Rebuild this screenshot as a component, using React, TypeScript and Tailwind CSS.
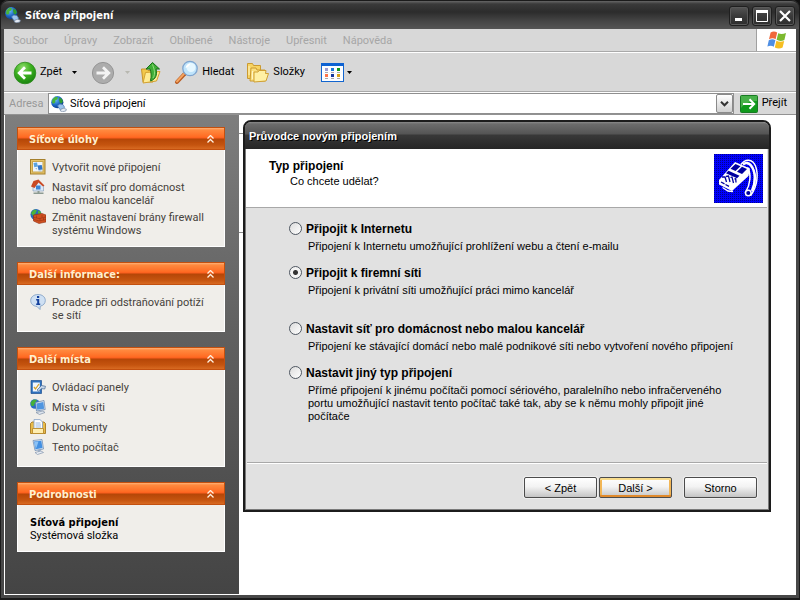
import React, { useState } from "react";

const ui = "font-[Roboto,'DejaVu_Sans_Condensed',sans-serif]";
const uiBold = "font-['DejaVu_Sans_Condensed','DejaVu_Sans',sans-serif] font-bold";
const sans = "font-['Liberation_Sans',Arial,sans-serif]";

type IconProps = { size?: number };

function NetGlobe({ size = 16 }: IconProps) {
  return (
    <svg width={size} height={size} viewBox="0 0 16 16" aria-hidden="true">
      <defs>
        <radialGradient id="globe" cx="0.35" cy="0.3" r="0.8">
          <stop offset="0" stopColor="#6fc0f4" />
          <stop offset="0.55" stopColor="#1c66c4" />
          <stop offset="1" stopColor="#0b2f7c" />
        </radialGradient>
      </defs>
      <circle cx="6.3" cy="6.2" r="6.1" fill="url(#globe)" />
      <path d="M1.5 3.2 4.5.8 7 1.2 6.2 3.4 4.4 4.2 4.2 6.5 2.4 7.8 1 6.4z" fill="#49b53a" />
      <path d="M8.4 1.8 10.8 2.8 12 5.4 10.4 7.8 8.7 6.2 8 3.8z" fill="#2f9c33" />
      <path d="M6.5 9.800 8.800 8 12 8.600 13.600 11.200 12 13.200 8.800 13.400z" fill="#9cc3ec" stroke="#4a76ae" strokeWidth="0.7" />
      <path d="M9.500 13.600 12.4 12.200 15.4 13.200 14.8 15 11.6 15.700 9.4 15z" fill="#e4ebf4" stroke="#7b8ca6" strokeWidth="0.7" />
    </svg>
  );
}

function BackIcon() {
  return (
    <svg width="24" height="24" viewBox="0 0 24 24" aria-hidden="true">
      <defs>
        <radialGradient id="back" cx="0.4" cy="0.25" r="0.85">
          <stop offset="0" stopColor="#8fdc6c" />
          <stop offset="0.45" stopColor="#3cb01f" />
          <stop offset="1" stopColor="#127a0c" />
        </radialGradient>
      </defs>
      <circle cx="12" cy="12" r="10.8" fill="url(#back)" stroke="#2c8a1c" strokeWidth="0.8" />
      <path d="M18.5 12H7M12 6.2 6.2 12l5.8 5.8" fill="none" stroke="#fff" strokeWidth="2.8" />
    </svg>
  );
}

function ForwardIcon() {
  return (
    <svg width="24" height="24" viewBox="0 0 24 24" aria-hidden="true">
      <circle cx="12" cy="12" r="10.6" fill="#acacac" stroke="#959595" />
      <path d="M5.5 12H17M12 6.2l5.8 5.8-5.8 5.8" fill="none" stroke="#f4f4f4" strokeWidth="2.8" />
    </svg>
  );
}

function FolderUpIcon() {
  return (
    <svg width="22" height="24" viewBox="0 0 22 24" aria-hidden="true">
      <path d="M1.500 8h5l1.500 1.500h5V21H3z" fill="#f2c84b" stroke="#c8952a" />
      <path d="m5.500 11.500 14.500-1-3.500 9.500L3 22z" fill="#ffeb93" stroke="#d3a231" />
      <path d="M12.500 1.500 19.500 8H16c1.500 6-.5 10.500-5.500 12-.5-.5 2-4.500-.5-12H6z" fill="#3fae36" stroke="#17701a" />
      <path d="M12.500 3.500 14 8c1 4 .5 7-1 9" fill="none" stroke="#8fdc7c" />
    </svg>
  );
}

function SearchIcon() {
  return (
    <svg width="25" height="25" viewBox="0 0 25 25" aria-hidden="true">
      <path d="M3 22 10.500 14" stroke="#b85a21" strokeWidth="4" strokeLinecap="round" />
      <path d="M3 21.500 10 13.800" stroke="#f5a561" strokeWidth="2" strokeLinecap="round" />
      <circle cx="16" cy="8.500" r="7.200" fill="#bfe4fb" stroke="#7fa5cf" strokeWidth="1.300" />
      <circle cx="17" cy="7.500" r="4.500" fill="#e6f7ff" />
      <path d="M11.500 8c.5-3 2.500-4.500 5-4.500-1 2-2.500 3.500-5 4.500z" fill="#fff" />
    </svg>
  );
}

function FoldersIcon() {
  return (
    <svg width="24" height="22" viewBox="0 0 24 22" aria-hidden="true">
      <path d="M1.500 1.500h5l1 2h7v13h-13z" fill="#f7d464" stroke="#cb9a31" />
      <path d="M5 6h5l1 2h8v11H4z" fill="#fae081" stroke="#cb9a31" />
      <path d="M8 10h4l1-1.500h7l-.5 3H22.500l-2.500 7.500-12 1z" fill="#fff0a4" stroke="#d0a033" />
      <path d="M3 4v9M6.500 9v8" stroke="#fff5c4" />
    </svg>
  );
}

function ViewsIcon() {
  const dots = [
    ["#9b9bd0", 4, 5], ["#1777d8", 10, 5], ["#10991c", 16, 5],
    ["#ff7448", 4, 11], ["#14389c", 10, 11], ["#d6a115", 16, 11],
  ] as const;
  return (
    <svg width="23" height="19" viewBox="0 0 23 19" shapeRendering="crispEdges" aria-hidden="true">
      <rect x="0.500" y="0.500" width="22" height="18" fill="#fbfdff" stroke="#1265cf" />
      <rect width="23" height="3" fill="#0d62d2" />
      {dots.map(([c, x, y]) => (
        <g key={c}>
          <rect x={x} y={y} width="3" height="3" fill={c} />
          <rect x={x} y={y + 4} width="3" height="1" fill="#a9a9a9" />
        </g>
      ))}
    </svg>
  );
}

function WinFlag() {
  return (
    <svg width="20" height="19" viewBox="0 0 20 19" aria-hidden="true">
      <path d="M3.600 1.600C6 .2 8 .4 10.200 1.600L8.600 8.200C6.600 7 4.600 7 2 8.200z" fill="#f0683a" />
      <path d="M11.200 2.200c2.400 1.200 4.800 1 7.800-.2l-1.600 7c-2.800 1.200-5.400 1.200-7.800-.2z" fill="#7cb92f" />
      <path d="M1.800 9.200C4.400 8 6.400 8 8.400 9.200L6.800 15.800C4.800 14.600 2.800 14.600.4 15.600z" fill="#4f8fe4" />
      <path d="M9.400 9.800c2.400 1.300 5 1.300 7.800.2l-1.600 6.600c-2.600 1.200-5.200 1.200-7.800-.2z" fill="#f6be22" />
    </svg>
  );
}

function GoIcon() {
  return (
    <svg width="18" height="18" viewBox="0 0 18 18" aria-hidden="true">
      <rect x="0.500" y="0.500" width="17" height="17" rx="1" fill="#109a1c" stroke="#187a23" />
      <path d="M1 1h16v5C10 6 5 8 1 13z" fill="#6cc268" opacity="0.600" />
      <path d="M3 9h11M9.500 4.200 14.200 9l-4.700 4.800" fill="none" stroke="#fff" strokeWidth="2" />
    </svg>
  );
}

function Svg16({ children }: { children: React.ReactNode }) {
  return (
    <svg width="16" height="16" viewBox="0 0 16 16" className="-mt-0.5 shrink-0" aria-hidden="true">
      {children}
    </svg>
  );
}

const NewConnIcon = () => (
  <Svg16>
    <rect x="0.500" y="0.500" width="14.500" height="14.500" fill="#e5c369" stroke="#a5802c" />
    <rect x="2.500" y="2.500" width="10.500" height="10.500" fill="#edf5fc" stroke="#c9a54c" />
    <path d="M3.500 4 7 3.500l.8 4-3.500.8z" fill="#5aa3e0" />
    <path d="m7.500 6.500 4.200-.5.800 4.500-4 .5z" fill="#2f74c8" />
    <path d="m5 9.500 2-.5v1.500zM8.500 11.500h3v.8h-3z" fill="#8fb3d4" />
  </Svg16>
);

const HomeNetIcon = () => (
  <Svg16>
    <path d="M3 6 8 2l5.500 4.500V12H3z" fill="#dbe9f8" stroke="#8197b5" strokeWidth="0.600" />
    <path d="M1 7.500 3.500 2 8.500.5 14.500 6.500 13 7.500 8.500 3.500 4.500 9z" fill="#c94a24" />
    <rect x="6" y="6.500" width="4.500" height="4" fill="#3c84d4" />
    <path d="M7.500 12h2v1.500h4v1.500h-10v-1.500h4z" fill="#8c9a92" />
  </Svg16>
);

const FirewallIcon = () => (
  <Svg16>
    <circle cx="6" cy="5.500" r="5.500" fill="#2768bd" />
    <path d="M1 4 4 .5l3 .8-1.500 3L3 7z" fill="#4bb53c" />
    <path d="M8 1.500 11 3v3.500L8 4.500z" fill="#4bb53c" />
    <path d="M3.500 6 12 4.500 16 6v7l-7 1.500L3.500 12z" fill="#d0501f" stroke="#8d2f15" strokeWidth="0.600" />
    <path d="M3.500 8.300 9 9.600 16 8M3.500 10.300 9 12 16 10.500M6.500 6.500v2.500M12 6v2.500M10 9.500v2M13.500 9v2" stroke="#8d2f15" strokeWidth="0.500" fill="none" />
  </Svg16>
);

const InfoIcon = () => (
  <Svg16>
    <path d="M8 .5c4.300 0 7.300 2.500 7.300 6 0 3-2 5-5 5.700L10 15.500 7 12.500C3 12 .7 9.700.7 6.500.7 3 3.700.5 8 .5z" fill="#cfe0f3" stroke="#7c9cc2" strokeWidth="0.800" />
    <path d="M7 2h2.200v2H7zM6.200 5h3v4.500h1V11h-4V9.500h1v-3h-1z" fill="#123f9c" />
  </Svg16>
);

const PanelIcon = () => (
  <Svg16>
    <path d="M1 1.500h10.500v13H1z" fill="#2d70bd" stroke="#1d4f91" strokeWidth="0.700" />
    <path d="M2.800 3.500h7v9h-7z" fill="#f1f6fc" />
    <path d="m4 8 1.500 2L9 5" fill="none" stroke="#d8a22a" strokeWidth="1.300" />
    <path d="m7 11 4.500-4.500 4 .8-.8 2.700-3-.4-3.200 2.600z" fill="#c6d6ea" stroke="#47688f" strokeWidth="0.700" />
  </Svg16>
);

const NetPlacesIcon = () => (
  <Svg16>
    <circle cx="5" cy="5" r="4.800" fill="#2a6dc6" />
    <path d="M.6 3.500 3.500.5 7 1 5 4 3.500 7 1.500 7z" fill="#45b03a" />
    <path d="M5.500 3.500 14 1.500l1.200 9-8.700 1.500z" fill="#d9e5f3" stroke="#5c7da8" strokeWidth="0.700" />
    <path d="m6.500 4.500 6.800-1.500.9 6.700-7 1z" fill="#4f95e0" />
    <path d="m6 13.500 7-1.500 2 1.500-5.500 2z" fill="#dfe6ef" stroke="#7f90a8" strokeWidth="0.700" />
  </Svg16>
);

const DocsIcon = () => (
  <Svg16>
    <path d="M.5 4.500 2 3h12l1.500 1.500v10H.5z" fill="#e8bb4a" stroke="#a97a20" strokeWidth="0.900" />
    <path d="M4 .6h6l2.500 2.400V12H4z" fill="#fff" stroke="#7f9cc4" strokeWidth="0.800" />
    <path d="M5.500 4h5M5.500 6h5.500M5.500 8h5.500" stroke="#8fb0dc" strokeWidth="0.900" />
    <path d="M2.500 9.500h11v5h-11z" fill="#ffeeb0" stroke="#b98a2c" strokeWidth="0.900" />
  </Svg16>
);

const ComputerIcon = () => (
  <Svg16>
    <path d="m3 1.500 9-1 1.500 9.500-8.500 1.500z" fill="#d8e5f4" stroke="#6484ad" strokeWidth="0.700" />
    <path d="m4 2.500 7.300-.8 1.200 7.300-7 1.200z" fill="#4390e2" />
    <path d="m4.500 3 4-.5-2 6-.8.500z" fill="#8cc2f5" />
    <path d="m7.500 11 3-.5.5 2-3 .5z" fill="#9badc4" />
    <path d="m5 13.500 6-1.500 2.500 1.500-6 2z" fill="#e8edf4" stroke="#8495ae" strokeWidth="0.700" />
  </Svg16>
);

function PlugPicture() {
  return (
    <svg width="49" height="49" viewBox="0 0 49 49" className="shrink-0" role="img" aria-label="Modem">
      <defs>
        <pattern id="weave" width="2" height="2" patternUnits="userSpaceOnUse">
          <rect width="2" height="2" fill="#0000ff" />
          <rect width="1" height="1" fill="#000090" shapeRendering="crispEdges" />
        </pattern>
      </defs>
      <rect width="49" height="49" fill="#0000e0" />
      <rect width="49" height="49" fill="url(#weave)" />
      <path d="M27 10.500C31 4.500 38.500 4.500 41.500 12C44.500 20 43.500 32 37 41L31.500 38.500C36.500 30 37.500 20 33.500 13.500" fill="none" stroke="#fff" strokeWidth="1.500" />
      <path d="M29 10.500C32 8 35 9 37 11.500C42 18 42 28 38 37" fill="none" stroke="#fff" strokeWidth="2.600" />
      <circle cx="34.300" cy="39" r="2.800" fill="#0000a0" stroke="#fff" strokeWidth="1.500" />
      <path d="M21 8 36 14.500 34.500 22 18 37 5 30.500V26z" fill="#fff" />
      <path d="m21.500 10 5 2.200-5 4.800-5-2.200zM28 12.800l5 2.200-5 5-5-2.200z" fill="#0000a0" />
      <path d="m14.500 16.800 11 5-2.500 2.500-11-5z" fill="#0000a0" />
      <path d="m8 23 3 0 1.500 5M12 22.500l2.500-.5 1.500 6M16.500 23.500l1.500-.5 1.500 6M20.500 25l1.200-.3.300 3.800M7 28l3.500 1.800M11.500 30.500l3.500 1.800" fill="none" stroke="#0000a0" strokeWidth="1.300" />
      <path d="M8.500 33.500 14 37l5 .5" fill="none" stroke="#fff" strokeWidth="1.300" />
    </svg>
  );
}

function Chevrons() {
  return (
    <svg width="7" height="8" viewBox="0 0 7 8" aria-hidden="true">
      <path d="M.5 3.500l3-3 3 3M.5 7.500l3-3 3 3" fill="none" stroke="#fff1e0" strokeWidth="1.300" />
    </svg>
  );
}

function Caret({ color }: { color: string }) {
  return (
    <svg width="5" height="3" viewBox="0 0 5 3" aria-hidden="true">
      <path d="M0 0h5L2.500 3z" fill={color} />
    </svg>
  );
}

function Panel({ title, children }: { title: string; children: React.ReactNode }) {
  return (
    <section className="w-full">
      <h2>
        <button
          type="button"
          className="flex h-[23px] w-full items-center justify-between border border-[#c3500f] bg-[linear-gradient(#ffb277_0px,#ff8a3f_2px,#ff6a22_9px,#f95c1d_10px,#b54607_11px,#c5540f_17px,#d86a22_21px)] pr-2.5 pl-[11px] text-left"
        >
          <span className={`pt-0.5 text-[11px] leading-4 text-[#fff0cf] ${uiBold}`}>{title}</span>
          <Chevrons />
        </button>
      </h2>
      <div className="border border-t-0 border-white bg-[#f0eeea] px-3 pt-[11px] pb-[9px]">{children}</div>
    </section>
  );
}

function TaskLink({ icon, children }: { icon: React.ReactNode; children: React.ReactNode }) {
  return (
    <li>
      <a href="#" className="flex min-h-4 gap-1.5 text-[11px] leading-[13px] text-[#46423c]">
        {icon}
        <span>{children}</span>
      </a>
    </li>
  );
}

const titleBtn =
  "flex size-5 items-center justify-center rounded-[3px] border border-[#1f1f1f] bg-[linear-gradient(#555,#3a3a3a_50%,#2e2e2e)] shadow-[inset_0_0_0_1px_#5a5a5a]";

const options = [
  { id: "internet", label: "Připojit k Internetu", text: ["Připojení k Internetu umožňující prohlížení webu a čtení e-mailu"], space: "h-[44px]" },
  { id: "firma", label: "Připojit k firemní síti", text: ["Připojení k privátní síti umožňující práci mimo kancelář"], space: "h-[56px]" },
  { id: "domov", label: "Nastavit síť pro domácnost nebo malou kancelář", text: ["Připojení ke stávající domácí nebo malé podnikové síti nebo vytvoření nového připojení"], space: "h-[44px]" },
  {
    id: "jiny",
    label: "Nastavit jiný typ připojení",
    text: [
      "Přímé připojení k jinému počítači pomocí sériového, paralelního nebo infračerveného",
      "portu umožňující nastavit tento počítač také tak, aby se k němu mohly připojit jiné",
      "počítače",
    ],
    space: "h-[56px]",
  },
];

function WizardButton({ children, primary = false }: { children: React.ReactNode; primary?: boolean }) {
  return (
    <button
      type="button"
      className={`h-[21px] w-[73px] rounded-[2px] border border-[#4c4c4c] bg-[linear-gradient(#fff,#f3f3f3_45%,#c4c4c4)] text-[11px] leading-4 text-black ${
        primary ? "shadow-[inset_0_2px_0_#f8dc8c,inset_0_-2px_0_#e08a2c,inset_2px_0_0_#f2b656,inset_-2px_0_0_#f2b656]" : "shadow-[0_0_0_1px_#eeeeee]"
      }`}
    >
      {children}
    </button>
  );
}

function Wizard() {
  const [choice, setChoice] = useState("firma");
  return (
    <div
      role="dialog"
      aria-labelledby="wizard-title"
      className={`absolute top-[5px] left-[4px] flex h-[392px] w-[528px] flex-col rounded-t-lg border-2 border-[#1c1c1c] bg-[#e1e1e1] shadow-[inset_-1px_-1px_0_#7a7a7a,inset_1px_0_0_#7a7a7a] ${sans}`}
    >
      <div className="flex h-[27px] shrink-0 items-center rounded-t-md bg-[linear-gradient(#8a8a8a_0px,#6c6c6c_2px,#545454_12px,#383838_13px,#262626)] px-1 pt-0.5">
        <h1 id="wizard-title" className="text-[11px] font-bold text-white [text-shadow:1px_1px_0_#000]">
          Průvodce novým připojením
        </h1>
      </div>
      <div className="mr-0.5 ml-px flex h-[59px] shrink-0 items-start justify-between border-b border-[#a8a8a8] bg-white pt-[5px] pr-1 pl-[23px]">
        <div className="pt-[5px]">
          <h2 className="text-[12px] leading-[15px] font-bold">Typ připojení</h2>
          <p className="pl-[21px] text-[11px] leading-[15px]">Co chcete udělat?</p>
        </div>
        <PlugPicture />
      </div>
      <fieldset className="mx-0.5 flex-1 border-b border-[#a8a8a8] pt-[13px] pl-[42px] shadow-[0_1px_0_#fff]">
        {options.map((o) => (
          <div key={o.id} className={o.space}>
            <label className="flex h-[15px] items-center gap-1 text-[12px] font-bold">
              <input
                type="radio"
                name="typ"
                checked={choice === o.id}
                onChange={() => setChoice(o.id)}
                className="size-[13px] appearance-none rounded-full border border-[#4f5761] bg-[linear-gradient(135deg,#dcdcdc,#fff)] checked:bg-[radial-gradient(circle,#333_0_2px,#f3f3f3_3px)]"
              />
              {o.label}
            </label>
            <p className="pt-1 pl-[19px] text-[11px] leading-[13px]">
              {o.text.map((t) => (
                <span key={t} className="block whitespace-nowrap">{t}</span>
              ))}
            </p>
          </div>
        ))}
      </fieldset>
      <div className="flex h-[47px] shrink-0 items-start gap-0.5 pt-3.5 pr-3">
        <span className="flex-1" />
        <WizardButton>&lt; Zpět</WizardButton>
        <WizardButton primary>Další &gt;</WizardButton>
        <span className="w-2" />
        <WizardButton>Storno</WizardButton>
      </div>
    </div>
  );
}

export default function App() {
  const menus = ["Soubor", "Úpravy", "Zobrazit", "Oblíbené", "Nástroje", "Upřesnit", "Nápověda"];
  return (
    <div className={`bg-[#111] ${ui}`}>
      <div className="flex min-h-screen flex-col rounded-t-lg border-x border-b-2 border-[#1b1b1b] bg-[#484848] px-[3px] pb-[3px] text-[11px] text-black">
        <header className="-mx-[3px] flex h-[29px] shrink-0 items-center gap-1 rounded-t-lg border-t border-[#1b1b1b] bg-[linear-gradient(#666_0px,#3a3a3a_3px,#2c2c2c_11px,#454545_20px,#555)] pr-1 pl-1">
          <NetGlobe />
          <h1 className={`flex-1 pt-0.5 text-[11px] text-white ${uiBold}`}>Síťová připojení</h1>
          <div className="flex gap-[3px] pt-0.5">
            <button type="button" aria-label="Minimalizovat" className={titleBtn}>
              <svg width="12" height="12" aria-hidden="true"><path d="M2 8h7v3H2z" fill="#fff" /></svg>
            </button>
            <button type="button" aria-label="Maximalizovat" className={titleBtn}>
              <svg width="12" height="12" aria-hidden="true"><path d="M.5 1v10.500h11V1M0 1.500h12" fill="none" stroke="#fff" /><path d="M0 0h12v3H0z" fill="#fff" /></svg>
            </button>
            <button type="button" aria-label="Zavřít" className={titleBtn}>
              <svg width="12" height="12" aria-hidden="true"><path d="M1 1l10 10M11 1 1 11" stroke="#fff" strokeWidth="2.200" /></svg>
            </button>
          </div>
        </header>

        <nav className="flex h-[23px] shrink-0 border-b border-[#a9a9a9] bg-[#d8d8d8]">
          <ul className="flex flex-1 items-center gap-4 pt-0.5 pl-[9px] text-[#a6a6a6]">
            {menus.map((m) => (
              <li key={m}><button type="button" disabled>{m}</button></li>
            ))}
          </ul>
          <div className="flex w-10 items-center justify-center border-l border-[#a0a0a0] bg-white"><WinFlag /></div>
        </nav>

        <div className="flex h-10 shrink-0 items-center border-t border-b border-t-white border-b-[#a9a9a9] bg-[#d8d8d8] pt-px pl-[9px]">
          <button type="button" className="flex items-center gap-[3px]"><BackIcon />Zpět</button>
          <button type="button" aria-label="Historie zpět" className="px-2.5"><Caret color="#000" /></button>
          <button type="button" aria-label="Vpřed" disabled className="pl-1"><ForwardIcon /></button>
          <button type="button" aria-label="Historie vpřed" disabled className="px-2.5"><Caret color="#b8b8b0" /></button>
          <button type="button" aria-label="Nahoru" className="pr-3"><FolderUpIcon /></button>
          <button type="button" className="flex items-center gap-[3px]"><SearchIcon />Hledat</button>
          <button type="button" className="flex items-center gap-[3px] pl-3"><FoldersIcon />Složky</button>
          <button type="button" aria-label="Zobrazení" className="flex items-center gap-[3px] pl-4"><ViewsIcon /><Caret color="#000" /></button>
        </div>

        <form className="flex h-[23px] shrink-0 items-center border-t border-b border-t-white border-b-[#929292] bg-[#d8d8d8]" onSubmit={(e) => e.preventDefault()}>
          <label htmlFor="address" className="w-11 pt-0.5 pl-[5px] text-[#999]">Adresa</label>
          <div className="flex h-[21px] flex-1 items-center gap-[3px] border border-[#8f8f8f] bg-white pl-0.5">
            <NetGlobe />
            <input id="address" type="text" defaultValue="Síťová připojení" className="min-w-0 flex-1 bg-transparent pt-0.5 outline-none" />
            <button type="button" aria-label="Rozbalit" className="flex h-[19px] w-[17px] items-center justify-center rounded-[2px] border border-[#8a8a8a] bg-[linear-gradient(#fff,#d0d0d0)]">
              <svg width="9" height="6" aria-hidden="true"><path d="M1 .8 4.500 4.300 8 .8" fill="none" stroke="#333" strokeWidth="2" /></svg>
            </button>
          </div>
          <button type="submit" className="flex items-center gap-1 pr-[9px] pl-1.5"><GoIcon />Přejít</button>
        </form>

        <main className="flex flex-1 border-b border-l border-white bg-white">
          <aside className="flex w-[234px] shrink-0 flex-col gap-[15px] bg-[linear-gradient(#7e7e7e,#606060_45%,#444)] pt-3 pr-3.5 pb-3 pl-3">
            <Panel title="Síťové úlohy">
              <ul className="flex flex-col gap-1">
                <TaskLink icon={<NewConnIcon />}>Vytvořit nové připojení</TaskLink>
                <TaskLink icon={<HomeNetIcon />}>Nastavit síť pro domácnost<br />nebo malou kancelář</TaskLink>
                <TaskLink icon={<FirewallIcon />}>Změnit nastavení brány firewall<br />systému Windows</TaskLink>
              </ul>
            </Panel>
            <Panel title="Další informace:">
              <ul>
                <TaskLink icon={<InfoIcon />}>Poradce při odstraňování potíží<br />se sítí</TaskLink>
              </ul>
            </Panel>
            <Panel title="Další místa">
              <ul className="flex flex-col gap-1">
                <TaskLink icon={<PanelIcon />}>Ovládací panely</TaskLink>
                <TaskLink icon={<NetPlacesIcon />}>Místa v síti</TaskLink>
                <TaskLink icon={<DocsIcon />}>Dokumenty</TaskLink>
                <TaskLink icon={<ComputerIcon />}>Tento počítač</TaskLink>
              </ul>
            </Panel>
            <Panel title="Podrobnosti">
              <p className={`text-[11px] leading-[13px] ${uiBold}`}>Síťová připojení</p>
              <p className="text-[11px] leading-[13px]">Systémová složka</p>
            </Panel>
          </aside>
          <div className="relative flex-1">
            <div className="mt-[18px] h-[100px] w-1 border-y border-[#8a8a8a]" />
            <Wizard />
          </div>
        </main>
      </div>
    </div>
  );
}
